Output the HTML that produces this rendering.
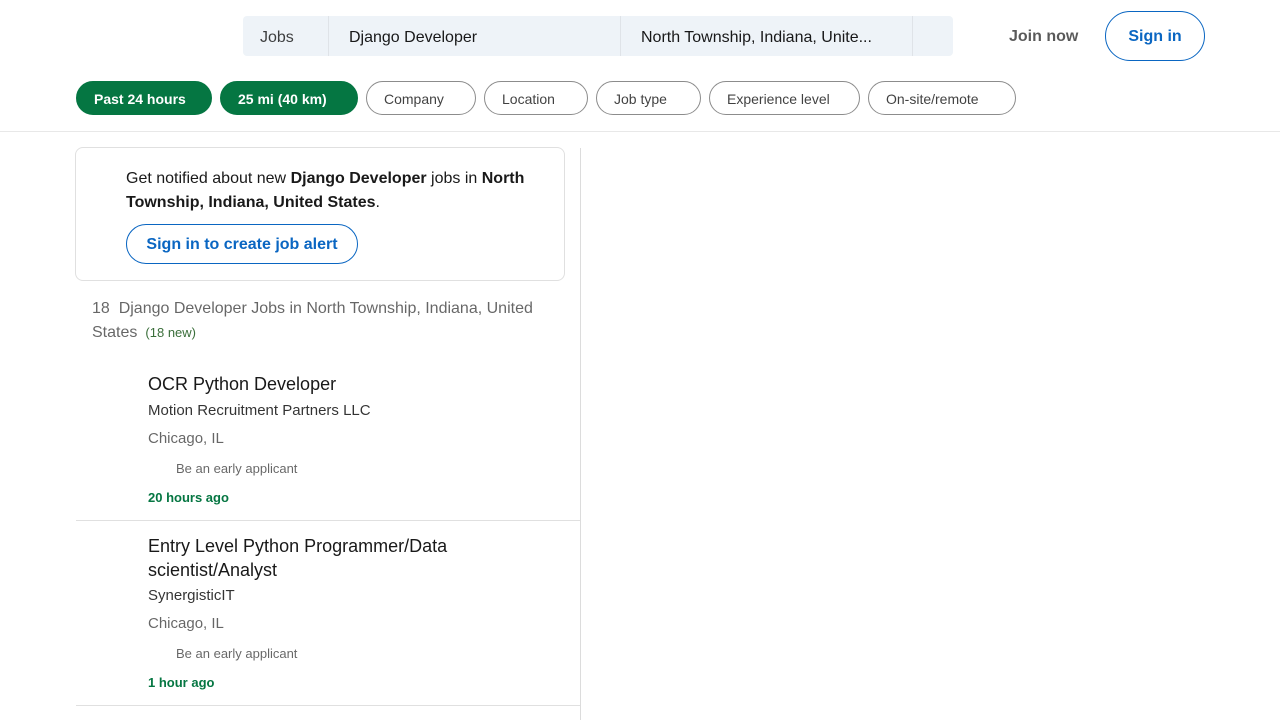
<!DOCTYPE html>
<html><head><meta charset="utf-8"><style>
*{box-sizing:border-box;margin:0;padding:0}
body{width:1280px;height:720px;overflow:hidden;background:#fff;font-family:"Liberation Sans",sans-serif;color:rgba(0,0,0,.9);position:relative}
.a{position:absolute;white-space:nowrap}
.search{position:absolute;left:243px;top:16px;width:710px;height:40px;background:#eef3f8;border-radius:4px}
.sep{position:absolute;top:0;width:1px;height:40px;background:#dfe3e8}
.pill{position:absolute;top:81px;height:34px;border-radius:17px;border:1px solid #8c8c8c;font-size:14px;padding-left:17px;line-height:34px;color:rgba(0,0,0,.75)}
.pill.g{background:#057642;border-color:#057642;color:#fff;font-weight:bold}
</style></head><body>
<div class="search">
<div class="sep" style="left:85px"></div><div class="sep" style="left:377px"></div><div class="sep" style="left:669px"></div>
<div class="a" style="left:17px;top:13px;font-size:16px;color:rgba(0,0,0,.75)">Jobs</div>
<div class="a" style="left:106px;top:13px;font-size:16px">Django Developer</div>
<div class="a" style="left:398px;top:13px;font-size:16px">North Township, Indiana, Unite...</div>
</div>
<div class="a" style="left:1009px;top:28px;font-size:16px;font-weight:bold;color:rgba(0,0,0,.65)">Join now</div>
<div class="a" style="left:1105px;top:11px;width:100px;height:50px;border:1px solid #0a66c2;border-radius:25px;color:#0a66c2;font-size:16px;font-weight:bold;text-align:center;line-height:50px">Sign in</div>
<div class="pill g" style="left:76px;width:136px">Past 24 hours</div>
<div class="pill g" style="left:220px;width:138px">25 mi (40 km)</div>
<div class="pill" style="left:366px;width:110px">Company</div>
<div class="pill" style="left:484px;width:104px">Location</div>
<div class="pill" style="left:596px;width:105px">Job type</div>
<div class="pill" style="left:709px;width:151px">Experience level</div>
<div class="pill" style="left:868px;width:148px">On-site/remote</div>
<div class="a" style="left:0;top:131px;width:1280px;height:1px;background:#e8e8e8"></div>
<div class="a" style="left:580px;top:148px;width:1px;height:572px;background:#dcdcdc"></div>
<div class="a" style="left:75px;top:147px;width:490px;height:134px;border:1px solid #e0e0e0;border-radius:8px"></div>
<div class="a" style="left:126px;top:167px;font-size:16px;line-height:24px">Get notified about new <b>Django Developer</b> jobs in <b>North</b><br><b>Township, Indiana, United States</b>.</div>
<div class="a" style="left:126px;top:224px;width:232px;height:40px;border:1px solid #0a66c2;border-radius:20px;color:#0a66c2;font-size:16px;font-weight:bold;text-align:center;line-height:40px">Sign in to create job alert</div>
<div class="a" style="left:92px;top:297px;font-size:16px;line-height:24px;color:rgba(0,0,0,.6)">18&nbsp; Django Developer Jobs in North Township, Indiana, United<br>States <span style="font-size:13px;color:#3a6e3a">&nbsp;(18 new)</span></div>
<div class="a" style="left:148px;top:374px;font-size:18px">OCR Python Developer</div>
<div class="a" style="left:148px;top:402px;font-size:15px;color:rgba(0,0,0,.8)">Motion Recruitment Partners LLC</div>
<div class="a" style="left:148px;top:430px;font-size:15px;color:rgba(0,0,0,.6)">Chicago, IL</div>
<div class="a" style="left:176px;top:461px;font-size:13px;color:rgba(0,0,0,.6)">Be an early applicant</div>
<div class="a" style="left:148px;top:490px;font-size:13px;font-weight:bold;color:#057642">20 hours ago</div>
<div class="a" style="left:76px;top:520px;width:504px;height:1px;background:#e0e0e0"></div>
<div class="a" style="left:148px;top:534px;font-size:18px;line-height:24px">Entry Level Python Programmer/Data<br>scientist/Analyst</div>
<div class="a" style="left:148px;top:587px;font-size:15px;color:rgba(0,0,0,.8)">SynergisticIT</div>
<div class="a" style="left:148px;top:615px;font-size:15px;color:rgba(0,0,0,.6)">Chicago, IL</div>
<div class="a" style="left:176px;top:646px;font-size:13px;color:rgba(0,0,0,.6)">Be an early applicant</div>
<div class="a" style="left:148px;top:675px;font-size:13px;font-weight:bold;color:#057642">1 hour ago</div>
<div class="a" style="left:76px;top:705px;width:504px;height:1px;background:#e0e0e0"></div>
</body></html>
